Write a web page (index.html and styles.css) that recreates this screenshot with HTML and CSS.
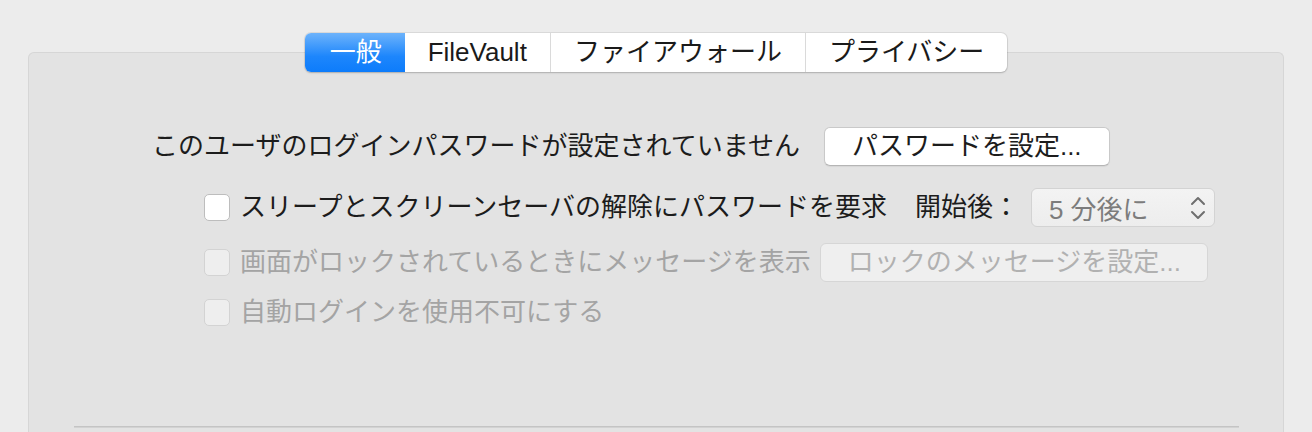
FILE: index.html
```html
<!DOCTYPE html>
<html lang="ja">
<head>
<meta charset="utf-8">
<link rel="stylesheet" href="styles.css">
</head>
<body>
<div class="window">
  <div class="tabs">
    <div class="seg">
      <div class="tab selected">一般</div>
      <div class="tab">FileVault</div>
      <div class="tab">ファイアウォール</div>
      <div class="tab">プライバシー</div>
    </div>
  </div>
  <div class="panel">
    <div class="content">
      <div class="row row1">
        <span class="label">このユーザのログインパスワードが設定されていません</span>
        <button class="btn">パスワードを設定...</button>
      </div>
      <div class="row row2 sub">
        <span class="check"></span>
        <span class="label">スリープとスクリーンセーバの解除にパスワードを要求</span>
        <span class="label after">開始後：</span>
        <span class="popup">
          <span class="popup-text">5 分後に</span>
          <svg class="arrows" width="16" height="26" viewBox="0 0 16 26">
            <path d="M2 9 L8 3 L14 9" fill="none" stroke="#6f6f6f" stroke-width="2" stroke-linecap="round" stroke-linejoin="round"/>
            <path d="M2 17 L8 23 L14 17" fill="none" stroke="#6f6f6f" stroke-width="2" stroke-linecap="round" stroke-linejoin="round"/>
          </svg>
        </span>
      </div>
      <div class="row row3 sub disabled">
        <span class="check off"></span>
        <span class="label">画面がロックされているときにメッセージを表示</span>
        <button class="btn off">ロックのメッセージを設定...</button>
      </div>
      <div class="row row4 sub disabled">
        <span class="check off"></span>
        <span class="label">自動ログインを使用不可にする</span>
      </div>
    </div>
    <div class="divider"></div>
  </div>
</div>
</body>
</html>
```

FILE: styles.css
```css
html, body {
  margin: 0;
  padding: 0;
}
body {
  background: #ececec;
  height: 432px;
  overflow: hidden;
  font-family: "Liberation Sans", "Noto Sans CJK JP", sans-serif;
  font-size: 26px;
  color: #1c1c1c;
}
.window {
  display: flex;
  flex-direction: column;
}
.tabs {
  display: flex;
  justify-content: center;
  padding-top: 33px;
  margin-bottom: -20px;
  position: relative;
  z-index: 1;
}
.seg {
  display: flex;
  height: 39px;
  background: #ffffff;
  border-radius: 6px;
  box-shadow: 0 0 0 1px rgba(0,0,0,0.07), 0 1px 2px rgba(0,0,0,0.18);
}
.tab {
  padding: 0 23px;
  line-height: 39px;
  border-left: 1px solid #dadada;
  white-space: nowrap;
  color: #1a1a1a;
}
.tab:first-child {
  border-left: none;
}
.tab.selected {
  background: linear-gradient(#6db3fb, #1d86fc 60%, #0d7cfb);
  color: #ffffff;
  border-radius: 6px 0 0 6px;
  padding: 0 23px 0 25px;
}
.tab.selected + .tab {
  border-left: none;
}
.panel {
  margin: 0 28px;
  height: 380px;
  background: #e3e3e3;
  border: 1px solid #d6d6d6;
  border-bottom: none;
  border-radius: 6px 6px 0 0;
  box-sizing: border-box;
  padding-top: 74px;
}
.content {
  padding-left: 123px;
  display: flex;
  flex-direction: column;
}
.row {
  display: flex;
  align-items: center;
  height: 39px;
  white-space: nowrap;
}
.row2 { margin-top: 22px; }
.row3 { margin-top: 16px; }
.row4 { margin-top: 11px; }
.sub {
  padding-left: 52px;
}
.label {
  line-height: 39px;
}
.row1 .label {
  margin-right: 24px;
}
.check {
  width: 26px;
  height: 27px;
  box-sizing: border-box;
  background: #ffffff;
  border: 1px solid #bdbdbd;
  border-radius: 5px;
  margin-right: 10px;
  flex: none;
}
.check.off {
  background: #eeeeee;
  border-color: #d3d3d3;
}
.after {
  margin-left: 28px;
  margin-right: 12px;
}
.btn {
  font: inherit;
  color: #1c1c1c;
  height: 39px;
  padding: 0 27px;
  background: #ffffff;
  border: 1px solid #c9c9c9;
  border-bottom-color: #b5b5b5;
  border-radius: 6px;
  box-shadow: 0 1px 1px rgba(0,0,0,0.06);
  line-height: 37px;
}
.btn.off {
  margin-left: 9px;
  width: 388px;
  background: #efefef;
  border-color: #d6d6d6;
  color: #b1b1b1;
  box-shadow: none;
}
.popup {
  display: flex;
  align-items: center;
  justify-content: space-between;
  width: 184px;
  height: 39px;
  box-sizing: border-box;
  padding: 0 8px 0 17px;
  background: linear-gradient(#f3f3f3, #ededed);
  border: 1px solid #d3d3d3;
  border-radius: 6px;
  color: #7c7c7c;
}
.arrows {
  display: block;
}
.disabled .label {
  color: #a4a4a4;
}
.divider {
  margin: 94px 44px 0 45px;
  height: 0;
  border-top: 1px solid #c4c4c4;
  border-bottom: 1px solid #d2d2d2;
}
```
